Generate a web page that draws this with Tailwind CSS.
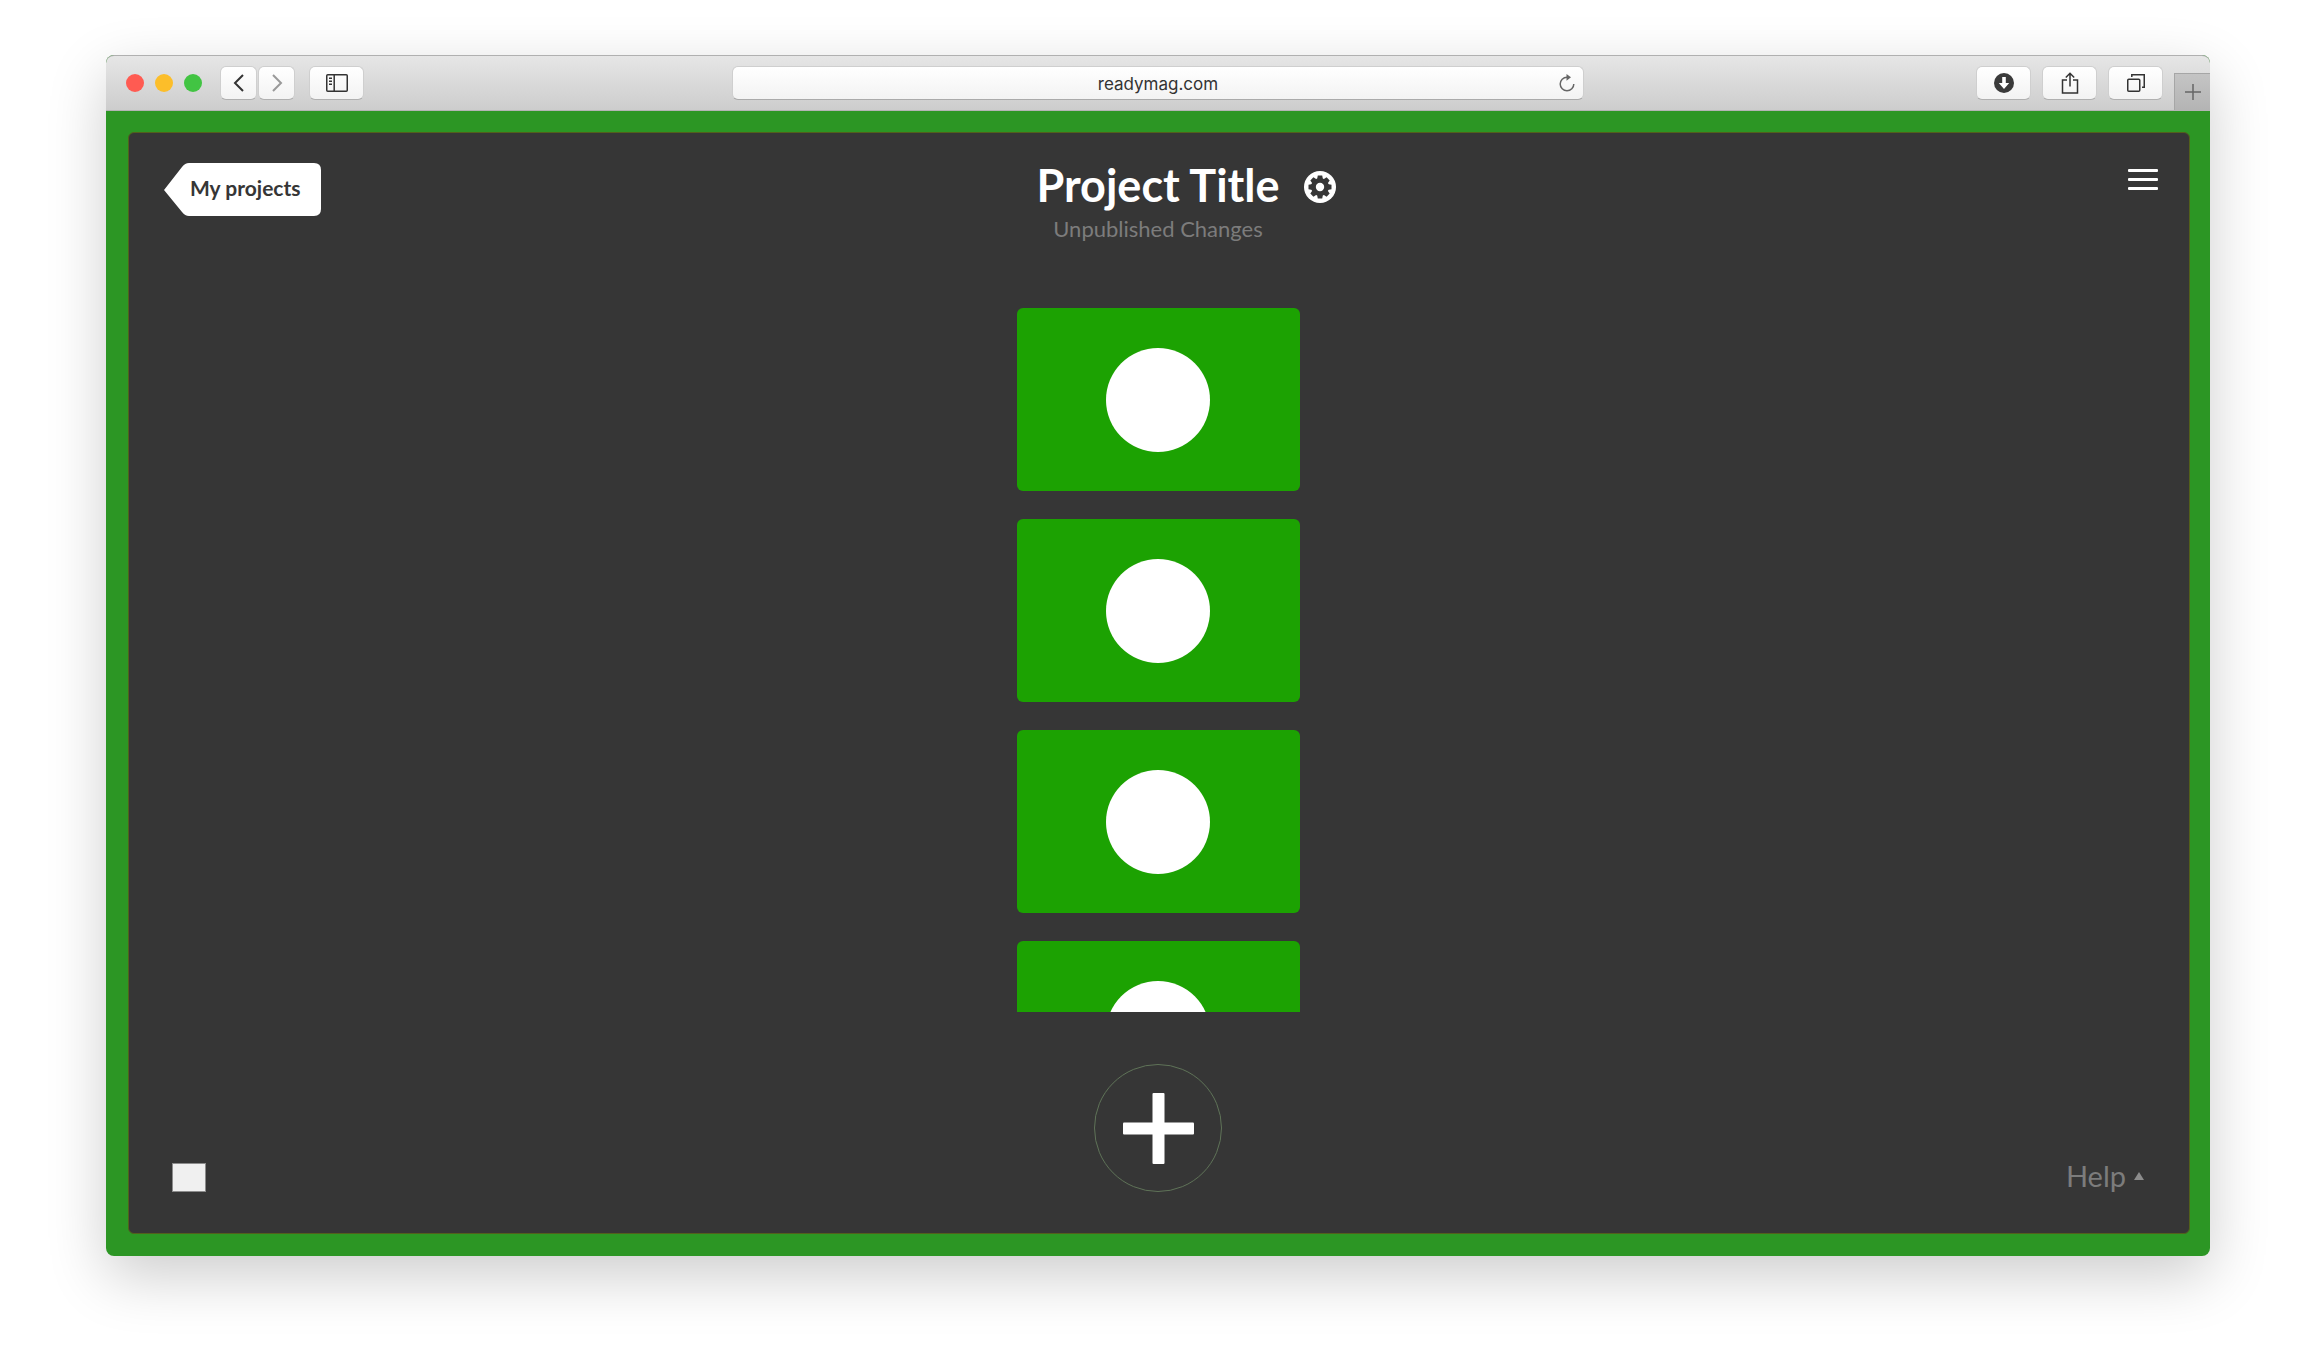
<!DOCTYPE html>
<html lang="en">

<head>
  <meta charset="UTF-8" />
  <meta name="viewport" content="width=device-width, initial-scale=1" />
  <title>Project Title</title>
  <script src="https://cdn.jsdelivr.net/npm/@tailwindcss/browser@4"></script>
</head>

<body class="bg-white font-[Lato,sans-serif] min-h-screen flex flex-col pt-[55px] pb-[108px] pl-[106px] pr-[108px]">

  <div class="grow flex flex-col rounded-lg bg-[#2c9624] shadow-[0_20px_60px_rgba(0,0,0,0.2)]">

    <!-- browser toolbar -->
    <div class="h-14 flex items-center gap-4 rounded-t-lg border-t border-[#b0b0b0] bg-linear-to-b from-[#e6e6e6] to-[#cdcdcd] border-b border-b-[#b4b4b4]">
      <div class="flex-1 flex items-center">
        <div class="flex gap-[11px] ml-5 mr-[18px]">
          <span class="size-[18px] rounded-full bg-[#ff5b52]"></span>
          <span class="size-[18px] rounded-full bg-[#fcbe2a]"></span>
          <span class="size-[18px] rounded-full bg-[#42c443]"></span>
        </div>
        <div class="flex gap-px mr-3.5">
          <button aria-label="Back" class="w-[37px] h-[34px] grid place-items-center rounded-md bg-linear-to-b from-white to-[#f3f3f3] border border-[#cfcfcf] border-b-[#b0b0b0]">
            <svg class="w-4 h-5" viewBox="0 0 16 20" fill="none" stroke="#333" stroke-width="2"><path d="M12 2 4 10l8 8" /></svg>
          </button>
          <button aria-label="Forward" class="w-[37px] h-[34px] grid place-items-center rounded-md bg-linear-to-b from-white to-[#f3f3f3] border border-[#cfcfcf] border-b-[#b0b0b0]">
            <svg class="w-4 h-5" viewBox="0 0 16 20" fill="none" stroke="#999" stroke-width="2"><path d="m4 2 8 8-8 8" /></svg>
          </button>
        </div>
        <button aria-label="Sidebar" class="w-[55px] h-[34px] grid place-items-center rounded-md bg-linear-to-b from-white to-[#f3f3f3] border border-[#cfcfcf] border-b-[#b0b0b0]">
          <svg class="w-[22px] h-[18px]" viewBox="0 0 22 18" fill="none" stroke="#333" stroke-width="1.5"><rect x="0.75" y="0.75" width="20.5" height="16.5" rx="1" /><path d="M8.2 1v16M3 4.2h3M3 7.2h3M3 10.2h3" /></svg>
        </button>
      </div>

      <div class="relative w-[852px] shrink">
        <input type="text" aria-label="Address" value="readymag.com" class="w-full h-[34px] pt-0.5 rounded-md text-center font-[Inter,sans-serif] text-[17px] text-[#333] bg-linear-to-b from-white to-[#f3f3f3] border border-[#cfcfcf] border-b-[#aaa]" />
        <button aria-label="Reload" class="absolute right-2 top-2">
          <svg class="size-[18px]" viewBox="0 0 18 18" fill="none" stroke="#666" stroke-width="1.5"><path d="M9 3.2A6.8 6.8 0 1 0 15.8 10" /><path d="M8.5 0 13 3.2 8.5 6.8z" fill="#666" stroke="none" /></svg>
        </button>
      </div>

      <div class="flex-1 flex items-center justify-end self-stretch gap-[11px]">
        <button aria-label="Downloads" class="w-[55px] h-[34px] grid place-items-center rounded-md bg-linear-to-b from-white to-[#f3f3f3] border border-[#cfcfcf] border-b-[#b0b0b0]">
          <svg class="size-5" viewBox="0 0 20 20"><circle cx="10" cy="10" r="10" fill="#3a3a3a" /><path d="M8.2 4h3.6v6h3.4L10 16l-5.2-6h3.4z" fill="#fff" /></svg>
        </button>
        <button aria-label="Share" class="w-[55px] h-[34px] grid place-items-center rounded-md bg-linear-to-b from-white to-[#f3f3f3] border border-[#cfcfcf] border-b-[#b0b0b0]">
          <svg class="w-[18px] h-[22px]" viewBox="0 0 18 22" fill="none" stroke="#333" stroke-width="1.5"><path d="M6 8H1.5v13h15V8H12M9 14.500V1.500M4.800 5.500 9 1.300l4.200 4.200" /></svg>
        </button>
        <button aria-label="Tabs" class="w-[55px] h-[34px] grid place-items-center rounded-md bg-linear-to-b from-white to-[#f3f3f3] border border-[#cfcfcf] border-b-[#b0b0b0]">
          <svg class="size-[18px]" viewBox="0 0 18 18" fill="none" stroke="#333" stroke-width="1.5"><rect x="0.75" y="5.250" width="12" height="12" rx="1" /><path d="M4.800 3V.75h12.450V13.200H15" /></svg>
        </button>
        <button aria-label="New tab" class="w-9 h-[37px] self-end grid place-items-center bg-linear-to-b from-[#c4c4c4] to-[#b4b4b4] border-t border-l border-[#a6a6a6]">
          <svg class="size-4" viewBox="0 0 16 16" stroke="#666" stroke-width="1.5"><path d="M8 0v16M0 8h16" /></svg>
        </button>
      </div>
    </div>

    <!-- project view -->
    <main class="grow flex flex-col mt-[21px] mb-[22px] ml-[22px] mr-5 pl-[35px] pr-[37px] rounded-md bg-[#363636] text-white border border-[#52601c]">
      <header class="grid grid-cols-[1fr_auto_1fr] items-start pt-[30px]">
        <a href="#" class="justify-self-start relative flex items-center h-[53px] w-[157px] text-[#363636] text-[21px] font-bold">
          <svg class="absolute inset-0" viewBox="0 0 157 53" fill="#fff"><path d="M0 27 18 4Q21 0 25 0H150Q157 0 157 7V46Q157 53 150 53H25Q21 53 18 49Z" /></svg>
          <span class="relative pl-[26px] pb-1">My projects</span>
        </a>
        <div class="text-center">
          <h1 class="relative text-[45px] leading-[44px] font-bold">Project Title
            <button aria-label="Project settings" class="absolute left-full top-2 ml-6">
              <svg class="size-8" viewBox="0 0 32 32"><circle cx="16" cy="16" r="16" fill="#fff" /><g fill="#363636"><circle cx="16" cy="16" r="9" /><g id="teeth"><path id="tooth" d="M13.800 4.500h4.400l.8 4h-6z" /><use href="#tooth" transform="rotate(45 16 16)" /><use href="#tooth" transform="rotate(90 16 16)" /><use href="#tooth" transform="rotate(135 16 16)" /></g><use href="#teeth" transform="rotate(180 16 16)" /></g><circle cx="16" cy="16" r="4.200" fill="#fff" /></svg>
            </button>
          </h1>
          <p class="text-[22px] leading-7 mt-2 text-[#7c7c7c]">Unpublished Changes</p>
        </div>
        <button aria-label="Menu" class="justify-self-end mt-1.5 -mr-1.5">
          <svg class="w-[30px] h-[22px]" viewBox="0 0 30 22" fill="#fff"><rect width="30" height="3" rx="1" /><rect y="9" width="30" height="3" rx="1" /><rect y="18" width="30" height="3" rx="1" /></svg>
        </button>
      </header>

      <div class="mt-[65px] h-[704px] overflow-hidden flex flex-col items-center gap-7">
        <div class="w-[283px] h-[183px] shrink-0 rounded-md bg-[#1ca202] grid place-items-center"><span class="size-[104px] rounded-full bg-white"></span></div>
        <div class="w-[283px] h-[183px] shrink-0 rounded-md bg-[#1ca202] grid place-items-center"><span class="size-[104px] rounded-full bg-white"></span></div>
        <div class="w-[283px] h-[183px] shrink-0 rounded-md bg-[#1ca202] grid place-items-center"><span class="size-[104px] rounded-full bg-white"></span></div>
        <div class="w-[283px] h-[183px] shrink-0 rounded-md bg-[#1ca202] grid place-items-center"><span class="size-[104px] rounded-full bg-white"></span></div>
      </div>

      <footer class="grow grid grid-cols-[1fr_auto_1fr] items-end pt-12 pb-[41px]">
        <button aria-label="Preview" class="w-[34px] h-[29px] ml-2 bg-[#f0f0f0] border border-[#8c8c8c]"></button>
        <button aria-label="Add page" class="size-32 grid place-items-center rounded-full border border-[#5f7358]">
          <svg class="size-[71px]" viewBox="0 0 71 71" fill="#fff"><rect x="29.500" width="12" height="71" rx="1" /><rect y="29.500" width="71" height="12" rx="1" /></svg>
        </button>
        <button class="justify-self-end flex items-center gap-2 mr-2 text-[29px] leading-8 text-[#7c7c7c]">Help
          <svg class="w-2.5 h-2" viewBox="0 0 10 8" fill="#8c8c8c"><path d="M5 0 10 8H0z" /></svg>
        </button>
      </footer>
    </main>
  </div>

</body>

</html>
